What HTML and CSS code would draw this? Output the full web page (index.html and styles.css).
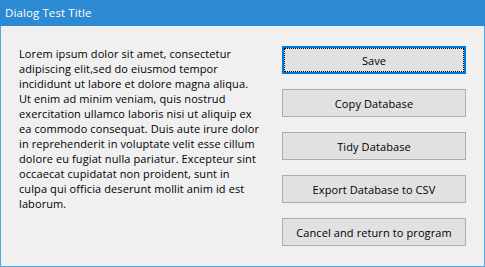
FILE: index.html
```html
<!DOCTYPE html>
<html lang="en">
<head>
<meta charset="utf-8">
<title>Dialog Test Title</title>
<link rel="stylesheet" href="styles.css">
</head>
<body>
<div class="window">
  <div class="titlebar">Dialog Test Title</div>
  <div class="content">
    <p class="message">Lorem ipsum dolor sit amet, consectetur<br>adipiscing elit,sed do eiusmod tempor<br>incididunt ut labore et dolore magna aliqua.<br>Ut enim ad minim veniam, quis nostrud<br>exercitation ullamco laboris nisi ut aliquip ex<br>ea commodo consequat. Duis aute irure dolor<br>in reprehenderit in voluptate velit esse cillum<br>dolore eu fugiat nulla pariatur. Excepteur sint<br>occaecat cupidatat non proident, sunt in<br>culpa qui officia deserunt mollit anim id est<br>laborum.</p>
    <div class="actions">
      <button class="btn btn-default" type="button"><span class="focus">Save</span></button>
      <button class="btn" type="button">Copy Database</button>
      <button class="btn" type="button">Tidy Database</button>
      <button class="btn" type="button">Export Database to CSV</button>
      <button class="btn" type="button">Cancel and return to program</button>
    </div>
  </div>
</div>
</body>
</html>
```
FILE: styles.css
```css
* { box-sizing: border-box; }

html, body {
  margin: 0;
  padding: 0;
  background: #f0f0f0;
}

.window {
  width: 485px;
  height: 267px;
  border: 1px solid #55a7e1;
  border-top: 0;
  background: #f0f0f0;
  font-family: "Open Sans", "Noto Sans", sans-serif;
  font-size: 11px;
  letter-spacing: 0.1px;
  color: #000;
  display: flex;
  flex-direction: column;
}

.titlebar {
  height: 26px;
  background: #2b8ad1;
  color: #fff;
  font-size: 11.5px;
  line-height: 25px;
  margin: 0 -1px;
  padding-left: 5px;
}

.content {
  display: flex;
  justify-content: space-between;
  padding: 20px 18px 0 18px;
}

.message {
  margin: 0;
  line-height: 15px;
  white-space: nowrap;
}

.actions {
  display: flex;
  flex-direction: column;
  gap: 15px;
  width: 184px;
}

.btn {
  height: 28px;
  width: 184px;
  background: #e1e1e1;
  border: 1px solid #adadad;
  font: inherit;
  letter-spacing: inherit;
  color: #000;
  padding: 0;
  margin: 0;
}

.btn-default {
  border: 2px solid #0078d7;
}

.focus {
  display: flex;
  align-items: center;
  justify-content: center;
  height: 100%;
  border: 1px dotted #000;
}
```
